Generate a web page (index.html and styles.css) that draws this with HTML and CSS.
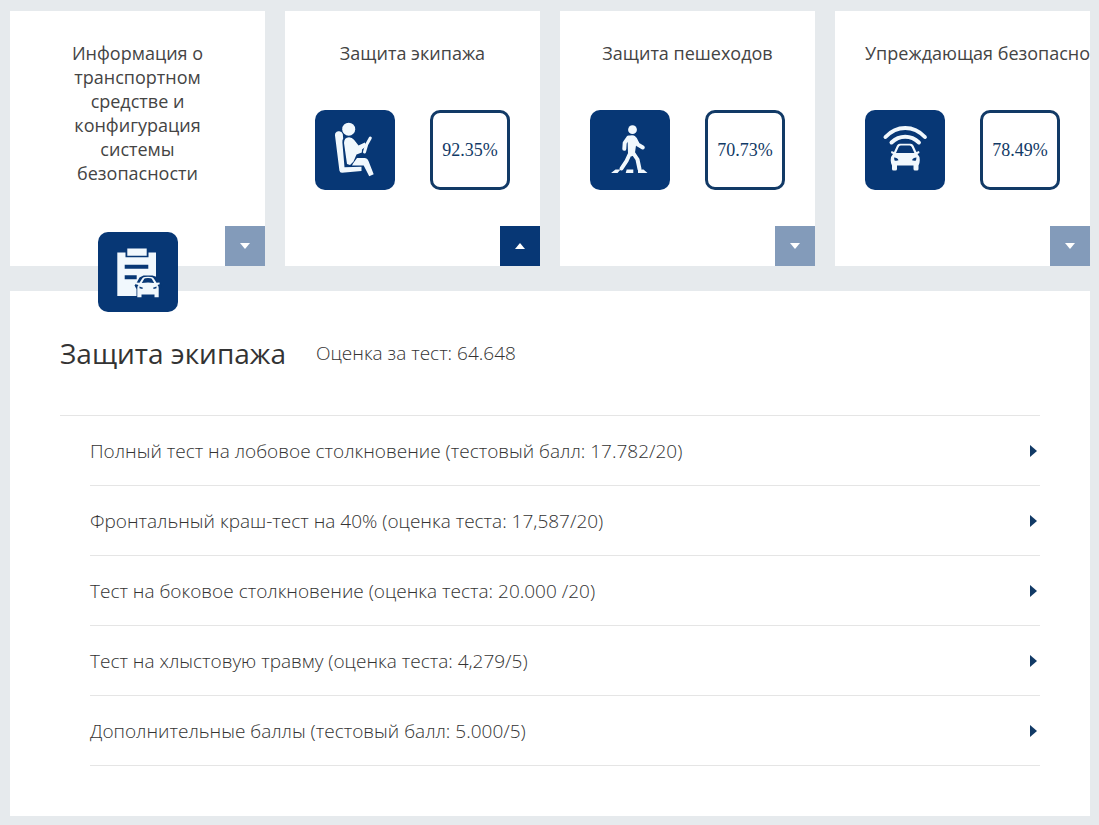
FILE: index.html
```html
<!DOCTYPE html>
<html lang="ru">
<head>
    <meta charset="UTF-8">
    <meta name="viewport" content="width=device-width, initial-scale=1">
    <title>Защита экипажа</title>
    <link rel="stylesheet" href="styles.css">
</head>

<body>
    <div class="cards">
        <div class="card">
            <h2 class="cardTitle wrapTitle">Информация о транспортном средстве и конфигурация системы безопасности</h2>
            <div class="cardRow">
                <svg class="cardIcon" viewBox="0 0 80 80" aria-hidden="true">
                    <path class="shape" d="M19.3 20.5H58V64H19.3z"/>
                    <path class="cut" d="M27.5 15.5h23v9.7h-23z"/>
                    <path class="shape" d="M29.3 16.5h19.4v7.3H29.3z"/>
                    <path class="cut" d="M26.7 32.7h23.6v4H26.7zM26.7 43.2h12v4h-12z"/>
                    <path class="cut" d="M38.5 66V57l-2-3.5 2-2.5 3-5.5 4-2h9l4.5 1.5 3 6 2 3-2 3v9z"/>
                    <path class="shape" d="M41.5 50.8l2.5-4.1q.8-1.6 2.6-1.8 3.4-.5 6.800 0 1.8.2 2.6 1.8l2.5 4.100 3-.4.2 1.8-2.2.7q1.2 1.2 1.2 3v9.4h-4.2v-2.7h-13v2.7h-4.2v-9.4q0-1.8 1.2-3l-2.7-.7.2-1.8z"/>
                    <path class="cut" d="M43.8 51l2.2-3.7q.4-.8 1.5-1 2.5-.4 5 0 1.1.2 1.5 1l2.2 3.7q-6.2-1-12.4 0zM41.5 54.5l3.5 1.2-.7 1.3-2.8-.8zM58.5 54.5l-3.5 1.2.7 1.3 2.8-.8z"/>
                </svg>
            </div>
            <button class="toggle" type="button" aria-label="Развернуть"><span class="arrowDown"></span></button>
        </div>

        <div class="card">
            <h2 class="cardTitle">Защита экипажа</h2>
            <div class="cardRow">
                <svg class="cardIcon" viewBox="0 0 80 80" aria-hidden="true">
                    <circle class="shape" cx="33.7" cy="19.2" r="6.5"/>
                    <path class="shape" d="M20 25.5a4 4 0 0 1 7.8-1.5l.4 4.5q-1 1.5-.8 4l2.1 24.8 17-.5v4.3L27 62.8q-2.3 0-2.6-2.3z"/>
                    <path class="shape" d="M29 33q0-5.5 5-5.8 3 0 5 2.6l4.5 5.7 6.3-3 1.7 3.5-4.5 3.5-.2 3-5.3 2-3 7-3.5 3.5-3-1z"/>
                    <path class="shape" d="M38 53.5l4-5.5h7.5q2.8 0 4 3l5.2 13.3-4.5 2-5.500-10.8H37z"/>
                    <path class="line" d="M55.3 28l-3.6 6.5L49.5 42"/>
                </svg>
                <span class="score">92.35%</span>
            </div>
            <button class="toggle active" type="button" aria-label="Свернуть"><span class="arrowUp"></span></button>
        </div>

        <div class="card">
            <h2 class="cardTitle">Защита пешеходов</h2>
            <div class="cardRow">
                <svg class="cardIcon" viewBox="0 0 80 80" aria-hidden="true">
                    <circle class="shape" cx="42.5" cy="19.7" r="4.4"/>
                    <path class="shape" d="M37.5 26.5q5-2.6 8 0l.8 7-1.3 9 .5 2.5-4.5 1.5-3-3z"/>
                    <path class="limb" d="M38.5 27.5l-3.8 5.3-.4 6M45 29l2.8 5.5 5 3M40 43.5l-3.5 7.5-5 7.5M43.5 43.5l4 6 2 9.5"/>
                    <path class="shape" d="M21 63l4.5-3.5h5L27.5 63zM35.7 63l1-3.5h6.6V63zM48 63v-3.5h5.5L57.5 63z"/>
                </svg>
                <span class="score">70.73%</span>
            </div>
            <button class="toggle" type="button" aria-label="Развернуть"><span class="arrowDown"></span></button>
        </div>

        <div class="card clipCard">
            <h2 class="cardTitle">Упреждающая безопасность</h2>
            <div class="cardRow">
                <svg class="cardIcon" viewBox="0 0 80 80" aria-hidden="true">
                    <path class="wave" d="M20.5 27q8.5-9 19.7-9t19.7 9M26.5 32.5q6-5.7 13.7-5.7t13.7 5.7"/>
                    <path class="shape" d="M29 42l3-6.5q.8-1.7 2.7-1.7h11q1.9 0 2.7 1.7l3 6.5 2.6-1 .5 2-2 1q2.5 2.5 2.3 6-.1 4-1.3 5.5v3.5q0 1.5-1.5 1.5h-2q-1.5 0-1.5-1.5v-3.5H32v3.5q0 1.5-1.5 1.5h-2q-1.5 0-1.5-1.5v-3.5q-1.2-1.5-1.3-5.5-.2-3.5 2.3-6l-2-1 .5-2z"/>
                    <path class="cut" d="M31 43l2.7-6q.6-1.5 2-1.5h9q1.4 0 2 1.5l2.7 6zM29 47.5q3.500 0 4.5 2.7-1.5.8-4 .3zM51.5 47.5q-3.5 0-4.5 2.7 1.5.8 4 .3z"/>
                </svg>
                <span class="score">78.49%</span>
            </div>
            <button class="toggle" type="button" aria-label="Развернуть"><span class="arrowDown"></span></button>
        </div>
    </div>

    <div class="panel">
        <div class="panelHead">
            <h1>Защита экипажа</h1>
            <p>Оценка за тест: 64.648</p>
        </div>
        <ul class="tests">
            <li><a href="#">Полный тест на лобовое столкновение (тестовый балл: 17.782/20)<span class="arrowRight"></span></a></li>
            <li><a href="#">Фронтальный краш-тест на 40% (оценка теста: 17,587/20)<span class="arrowRight"></span></a></li>
            <li><a href="#">Тест на боковое столкновение (оценка теста: 20.000 /20)<span class="arrowRight"></span></a></li>
            <li><a href="#">Тест на хлыстовую травму (оценка теста: 4,279/5)<span class="arrowRight"></span></a></li>
            <li><a href="#">Дополнительные баллы (тестовый балл: 5.000/5)<span class="arrowRight"></span></a></li>
        </ul>
    </div>
</body>
</html>
```

FILE: styles.css
```css
:root {
    --blue: #073775;
    --gray: #e6eaed;
}

* {
    margin: 0;
    padding: 0;
    box-sizing: border-box;
}

body {
    padding: 11px 9px 9px 10px;
    background-color: var(--gray);
    color: #333;
    font-family: "Open Sans", "Noto Sans", sans-serif;
    font-size: 19px;
    font-weight: 300;
    line-height: 24px;
}

/* 카드 영역 */
.cards {
    display: grid;
    grid-template-columns: repeat(4, minmax(0, 1fr));
    gap: 20px;
}

.card {
    position: relative;
    height: 255px;
    padding: 30px 30px 0;
    background-color: #fff;
}

.clipCard {
    overflow: hidden;
}

.cardTitle {
    color: #444;
    font-size: 18px;
    font-weight: 400;
    text-align: center;
    white-space: nowrap;
}

.wrapTitle {
    padding: 0 20px 2px;
    white-space: normal;
}

.cardRow {
    display: flex;
    justify-content: center;
    gap: 35px;
    margin-top: 45px;
}

.cardIcon {
    position: relative;
    z-index: 1;
    width: 80px;
    height: 80px;
    border-radius: 10px;
    background-color: var(--blue);
}

.shape {
    fill: #f1f8fd;
}

.cut {
    fill: var(--blue);
}

.line,
.limb,
.wave {
    fill: none;
    stroke: #f1f8fd;
    stroke-linecap: round;
    stroke-linejoin: round;
    stroke-width: 3;
}

.limb,
.wave {
    stroke-width: 4;
}

.score {
    display: flex;
    align-items: center;
    justify-content: center;
    width: 80px;
    height: 80px;
    border: 3px solid #123a66;
    border-radius: 10px;
    color: #123a66;
    font-family: "Liberation Serif", serif;
    font-size: 18px;
    font-weight: 400;
}

/* 카드 오른쪽 아래 버튼 */
.toggle {
    position: absolute;
    right: 0;
    bottom: 0;
    display: flex;
    align-items: center;
    justify-content: center;
    width: 40px;
    height: 40px;
    border: 0;
    background-color: #839bba;
    cursor: pointer;
}

.toggle.active {
    background-color: var(--blue);
}

.arrowDown,
.arrowUp {
    border: 5px solid transparent;
}

.arrowDown {
    border-top: 6px solid #fff;
    border-bottom: 0;
}

.arrowUp {
    border-top: 0;
    border-bottom: 6px solid #fff;
}

/* 상세 내용 */
.panel {
    margin-top: 25px;
    padding: 0 50px 50px;
    background-color: #fff;
}

.panelHead {
    display: flex;
    align-items: center;
    gap: 30px;
    height: 125px;
    border-bottom: 1px solid #e5e5e5;
}

.panelHead h1 {
    font-size: 28px;
    font-weight: 400;
    line-height: 40px;
}

.tests {
    padding-left: 30px;
    list-style-type: none;
}

.tests a {
    display: flex;
    align-items: center;
    justify-content: space-between;
    height: 70px;
    border-bottom: 1px solid #e5e5e5;
    color: inherit;
    text-decoration: none;
}

.arrowRight {
    margin-right: 3px;
    border: 6px solid transparent;
    border-right: 0;
    border-left: 7px solid #123a66;
}
```
